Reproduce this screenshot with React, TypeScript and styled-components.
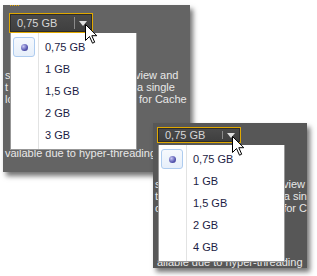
import React from 'react';
import styled, { createGlobalStyle } from 'styled-components';

const GlobalStyle = createGlobalStyle`
  html, body {
    margin: 0;
    padding: 0;
    background: #ffffff;
  }
  body {
    font-family: 'Liberation Sans', Arial, sans-serif;
  }
`;

const Stage = styled.div`
  position: relative;
  width: 317px;
  height: 276px;
  overflow: hidden;
  background: #ffffff;
`;

// a cropped screenshot lying on the canvas
const Panel = styled.div<{ $x: number; $y: number; $w: number; $h: number; $bg: string }>`
  position: absolute;
  left: ${(p) => p.$x}px;
  top: ${(p) => p.$y}px;
  width: ${(p) => p.$w}px;
  height: ${(p) => p.$h}px;
  background: ${(p) => p.$bg};
  box-shadow: 3px 4px 5px rgba(0, 0, 0, 0.55);
  overflow: hidden;
  display: flex;
  flex-direction: column;
  font-size: 11px;
`;

const Dots = styled.div`
  margin-left: 7px;
  width: 9px;
  height: 0;
  border-top: 1px dotted #e8a800;
`;

const Combo = styled.div<{ $top: number; $left: number; $h: number }>`
  margin: ${(p) => p.$top}px 0 0 ${(p) => p.$left}px;
  width: 84px;
  height: ${(p) => p.$h}px;
  box-sizing: border-box;
  border: 1px solid #e0a800;
  background: #2c2c2c;
  padding: 1px;
  display: flex;
`;

const ComboInner = styled.div`
  flex: 1;
  display: flex;
  align-items: center;
  background: linear-gradient(#4a4a4a, #3f3f3f);
  color: #d6d6d6;
`;

const ComboText = styled.span`
  flex: 1;
  padding-left: 6px;
`;

const ComboSep = styled.span`
  width: 1px;
  align-self: stretch;
  margin: 2px 0;
  background: #8a8a8a;
`;

const Arrow = styled.span`
  width: 16px;
  display: flex;
  justify-content: center;
  &::before {
    content: '';
    border-left: 4px solid transparent;
    border-right: 4px solid transparent;
    border-top: 5px solid #e0e0e0;
    margin-top: 1px;
  }
`;

const BgText = styled.div<{ $top: number }>`
  margin-top: ${(p) => p.$top}px;
  color: #e8e8e8;
  line-height: 12px;
  white-space: nowrap;
`;

const Line = styled.div<{ $split: number }>`
  display: flex;
  & > span:first-child {
    width: ${(p) => p.$split}px;
    padding-left: 2px;
    box-sizing: border-box;
    overflow: hidden;
  }
`;

const Right = styled.span<{ $pad: number }>`
  padding-left: ${(p) => p.$pad}px;
`;

const Footer = styled.div<{ $top: number; $left: number }>`
  margin: ${(p) => p.$top}px 0 0 ${(p) => p.$left}px;
  color: #e8e8e8;
  line-height: 12px;
  white-space: nowrap;
`;

const Menu = styled.ul<{ $x: number; $y: number }>`
  position: absolute;
  left: ${(p) => p.$x}px;
  top: ${(p) => p.$y}px;
  width: 127px;
  margin: 0;
  padding: 3px 0 3px 2px;
  box-sizing: border-box;
  list-style: none;
  background: #ffffff;
  border: 1px solid #979797;
  border-top: none;
  &::before {
    content: '';
    position: absolute;
    left: 27px;
    top: 0;
    bottom: 0;
    width: 1px;
    background: #e2e3e3;
  }
`;

const Item = styled.li`
  height: 22px;
  display: flex;
  align-items: center;
  color: #1c1c44;
  position: relative;
`;

const Gutter = styled.span<{ $on?: boolean }>`
  width: 22px;
  height: 20px;
  margin-right: 10px;
  box-sizing: border-box;
  border-radius: 3px;
  display: flex;
  align-items: center;
  justify-content: center;
  border: 1px solid ${(p) => (p.$on ? '#aeccef' : 'transparent')};
  background: ${(p) => (p.$on ? 'linear-gradient(#f6f9fd, #e6effa)' : 'transparent')};
`;

const Bullet = styled.span`
  width: 7px;
  height: 7px;
  border-radius: 50%;
  background: radial-gradient(circle at 35% 35%, #c8c8f4, #5656b0 60%, #2e2e80);
`;

const Cursor = styled.svg<{ $x: number; $y: number }>`
  position: absolute;
  left: ${(p) => p.$x}px;
  top: ${(p) => p.$y}px;
`;

const Pointer = ({ x, y }: { x: number; y: number }) => (
  <Cursor $x={x} $y={y} width="13" height="20" viewBox="0 0 13 20">
    <path
      d="M0.5 0.5 L0.5 16.5 L4.5 12.5 L7.5 19.2 L9.7 18.2 L6.8 11.7 L11.8 11.7 Z"
      fill="#ffffff"
      stroke="#000000"
      strokeWidth="1"
      strokeLinejoin="miter"
    />
  </Cursor>
);

interface ShotProps {
  x: number;
  y: number;
  w: number;
  h: number;
  bg: string;
  dots?: boolean;
  comboTop: number;
  comboLeft: number;
  comboH: number;
  menuX: number;
  menuY: number;
  textTop: number;
  lines: [string, string][];
  footer: string;
  footerLeft: number;
  sizes: string[];
  cursor: [number, number];
}

const Shot = (p: ShotProps) => (
  <Panel $x={p.x} $y={p.y} $w={p.w} $h={p.h} $bg={p.bg}>
    {p.dots && <Dots />}
    <Combo $top={p.comboTop} $left={p.comboLeft} $h={p.comboH}>
      <ComboInner>
        <ComboText>0,75 GB</ComboText>
        <ComboSep />
        <Arrow />
      </ComboInner>
    </Combo>
    <BgText $top={p.textTop}>
      {p.lines.map(([l, r], i) => (
        <Line key={i} $split={p.menuX + 125}>
          <span>{l}</span>
          <Right $pad={i * 2}>{r}</Right>
        </Line>
      ))}
    </BgText>
    <Footer $top={42} $left={p.footerLeft}>
      {p.footer}
    </Footer>
    <Menu $x={p.menuX} $y={p.menuY}>
      {p.sizes.map((s, i) => (
        <Item key={s}>
          <Gutter $on={i === 0}>{i === 0 && <Bullet />}</Gutter>
          {s}
        </Item>
      ))}
    </Menu>
    <Pointer x={p.cursor[0]} y={p.cursor[1]} />
  </Panel>
);

export default function App() {
  return (
    <Stage>
      <GlobalStyle />
      <Shot
        x={3}
        y={5}
        w={187}
        h={167}
        bg="#646464"
        dots
        comboTop={7}
        comboLeft={6}
        comboH={20}
        menuX={7}
        menuY={28}
        textTop={36}
        lines={[
          ['s', 'view and'],
          ['t', 'a single'],
          ['lo', 'for Cache'],
        ]}
        footer="vailable due to hyper-threading."
        footerLeft={2}
        sizes={['0,75 GB', '1 GB', '1,5 GB', '2 GB', '3 GB']}
        cursor={[82, 19]}
      />
      <Shot
        x={153}
        y={123}
        w={154}
        h={145}
        bg="#575757"
        comboTop={4}
        comboLeft={4}
        comboH={19}
        menuX={5}
        menuY={22}
        textTop={35}
        lines={[
          ['s', 'view'],
          ['t', 'a sin'],
          ['o', 'for C'],
        ]}
        footer="ailable due to hyper-threading"
        footerLeft={4}
        sizes={['0,75 GB', '1 GB', '1,5 GB', '2 GB', '4 GB']}
        cursor={[79, 13]}
      />
    </Stage>
  );
}
